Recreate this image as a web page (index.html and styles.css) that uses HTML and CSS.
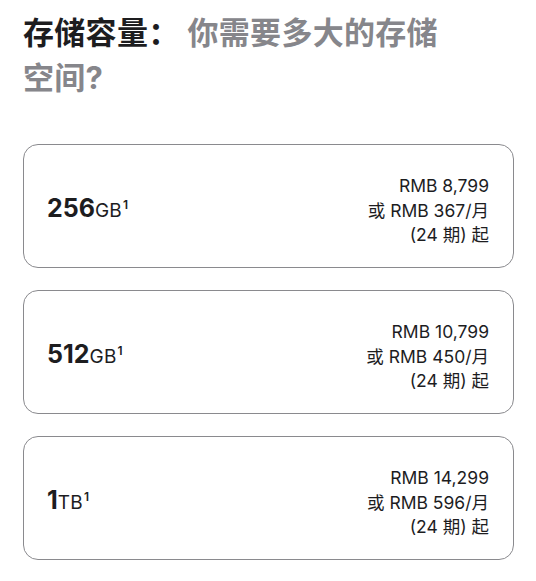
FILE: index.html
```html
<!DOCTYPE html>
<html lang="zh-CN">
<head>
<meta charset="utf-8">
<title>存储容量</title>
<link rel="stylesheet" href="styles.css">
</head>
<body>
<section class="storage">
  <h2 class="storage-title"><span class="title-strong">存储容量：</span>你需要多大的存储空间?</h2>
  <ul class="options">
    <li class="option">
      <span class="capacity"><span class="cap-num">256</span><span class="cap-unit">GB</span><sup class="footnote">1</sup></span>
      <span class="price">RMB 8,799<br>或 RMB 367/月<br>(24 期) 起</span>
    </li>
    <li class="option">
      <span class="capacity"><span class="cap-num">512</span><span class="cap-unit">GB</span><sup class="footnote">1</sup></span>
      <span class="price">RMB 10,799<br>或 RMB 450/月<br>(24 期) 起</span>
    </li>
    <li class="option">
      <span class="capacity"><span class="cap-num">1</span><span class="cap-unit">TB</span><sup class="footnote">1</sup></span>
      <span class="price">RMB 14,299<br>或 RMB 596/月<br>(24 期) 起</span>
    </li>
  </ul>
</section>
</body>
</html>
```

FILE: styles.css
```css
* {
  box-sizing: border-box;
}

html, body {
  margin: 0;
  padding: 0;
  background: #ffffff;
}

body {
  font-family: Inter, "Noto Sans CJK SC", sans-serif;
  color: #1d1d1f;
}

.storage {
  padding: 10px 22px 0 23px;
}

.storage-title {
  margin: 0;
  width: 442px;
  font-size: 31px;
  line-height: 45px;
  font-weight: 700;
  color: #86868b;
  letter-spacing: 0.3px;
}

.title-strong {
  color: #1d1d1f;
  margin-right: 8px;
}

.options {
  list-style: none;
  margin: 44px 0 0;
  padding: 0;
  display: flex;
  flex-direction: column;
  gap: 22px;
}

.option {
  height: 124px;
  border: 1px solid #8a8a8e;
  border-radius: 15px;
  display: flex;
  align-items: center;
  justify-content: space-between;
  padding: 4px 24px 0 23px;
}

.capacity {
  display: flex;
  align-items: baseline;
  color: #1d1d1f;
}

.cap-num {
  font-size: 25px;
  font-weight: 700;
}

.cap-unit {
  font-size: 19px;
  font-weight: 400;
  letter-spacing: 0.2px;
}

.footnote {
  font-size: 12px;
  font-weight: 600;
  position: relative;
  top: -8px;
  vertical-align: baseline;
  margin-left: 1px;
}

.price {
  margin-top: 6px;
  text-align: right;
  font-size: 17.5px;
  line-height: 24.5px;
  color: #1d1d1f;
}
```
